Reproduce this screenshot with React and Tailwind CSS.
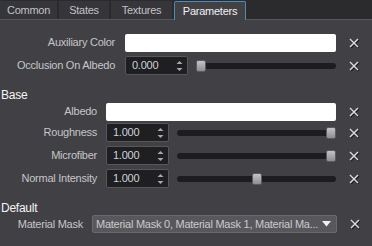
import React from 'react';

const font = { fontFamily: '"Liberation Sans", Arial, sans-serif' };

const ClearIcon = () => (
  <div className="w-9 flex justify-center items-center">
    <svg width="12" height="12" viewBox="0 0 12 12">
      <path d="M2 2 L10 10 M10 2 L2 10" stroke="#1c1c1e" strokeWidth="2.2" transform="translate(0.6 0.6)" />
      <path d="M2 2 L10 10 M10 2 L2 10" stroke="#dcdcdc" strokeWidth="1.5" />
    </svg>
  </div>
);

const SpinBox = ({ value, width }) => (
  <div className={`${width} h-[19px] flex items-center justify-between rounded-[2px] border border-[#56565b] bg-[#1f1f22] pl-[6px] pr-[4px]`}>
    <span className="text-[#cdd3da]">{value}</span>
    <svg width="7" height="12" viewBox="0 0 7 12">
      <path d="M0.5 4 L3.5 1 L6.5 4 Z" fill="#a8a8ac" />
      <path d="M0.5 8 L3.5 11 L6.5 8 Z" fill="#a8a8ac" />
    </svg>
  </div>
);

const Row = ({ label, labelWidth, height = 'h-[23px]', children }) => (
  <div className={`flex items-center ${height} pl-[17px]`}>
    <div className={`${labelWidth} text-right text-[#c6c6c8] shrink-0`}>{label}</div>
    <div className="flex-1 flex items-center ml-[9px]">{children}</div>
    <ClearIcon />
  </div>
);

const ColorField = () => <div className="flex-1 h-[18px] rounded-[2px] bg-white" />;

const SliderRow = ({ label, labelWidth, value, percent, spinWidth }) => (
  <Row label={label} labelWidth={labelWidth}>
    <SpinBox value={value} width={spinWidth} />
    <div className="relative flex-1 h-[14px] flex items-center ml-2">
      <div className="w-full h-[6px] rounded-full bg-[#1d1d1f]" />
      <div
        className="absolute top-[1px] w-[10px] h-[12px] rounded-[2px] border border-[#5c5c60] bg-gradient-to-b from-[#c4c4c6] to-[#8e8e92]"
        style={{ left: `calc((100% - 10px) * ${percent / 100})` }}
      />
    </div>
  </Row>
);

const tabs = [
  { name: 'Common', w: 'w-[57px]' },
  { name: 'States', w: 'w-[50px]' },
  { name: 'Textures', w: 'w-[61px]' },
  { name: 'Parameters', w: 'w-[72px]', active: true },
];

export default function App() {
  return (
    <div className="w-[372px] h-[246px] overflow-hidden bg-[#2b2b2e] text-[11px] tracking-[-0.25px] flex flex-col" style={font}>
      <div className="flex h-[19px] gap-[2px] items-end">
        {tabs.map((t) =>
          t.active ? (
            <div
              key={t.name}
              className={`${t.w} h-[19px] -mb-px relative z-10 flex items-center justify-center bg-[#404045] border border-b-0 border-[#4c8db8] rounded-t-[2px] text-[#f2f2f2]`}
            >
              {t.name}
            </div>
          ) : (
            <div key={t.name} className={`${t.w} h-[18px] flex items-center justify-center bg-[#35353a] text-[#c2c2c4]`}>
              {t.name}
            </div>
          )
        )}
      </div>
      <div className="flex-1 bg-[#404045] border-t border-[#56565b] pt-[11px]">
        <Row label="Auxiliary Color" labelWidth="w-[98px]">
          <div className="ml-px flex-1 flex">
            <ColorField />
          </div>
        </Row>
        <SliderRow label="Occlusion On Albedo" labelWidth="w-[98px]" value="0.000" percent={0} spinWidth="w-[63px] ml-px" />

        <div className="h-[14px] mt-[11px] flex items-center pl-[1px] text-[12px] text-[#f4f4f4]">Base</div>
        <Row label="Albedo" labelWidth="w-[80px]" height="h-[19px]">
          <ColorField />
        </Row>
        <SliderRow label="Roughness" labelWidth="w-[80px]" value="1.000" percent={100} spinWidth="w-[63px]" />
        <SliderRow label="Microfiber" labelWidth="w-[80px]" value="1.000" percent={100} spinWidth="w-[63px]" />
        <SliderRow label="Normal Intensity" labelWidth="w-[80px]" value="1.000" percent={50} spinWidth="w-[63px]" />

        <div className="h-[14px] mt-[11px] flex items-center pl-[1px] text-[12px] text-[#f4f4f4]">Default</div>
        <Row label="Material Mask" labelWidth="w-[66px]" height="h-[18px]">
          <div className="flex-1 h-[18px] flex items-center justify-between rounded-[2px] border border-[#6a6a6e] bg-[#58585c] pl-[3px] pr-[5px] min-w-0">
            <span className="text-[#cacacc] whitespace-nowrap overflow-hidden">Material Mask 0, Material Mask 1, Material Ma...</span>
            <svg width="9" height="6" viewBox="0 0 9 6" className="shrink-0 ml-1">
              <path d="M0 0 L9 0 L4.5 5.5 Z" fill="#f0f0f0" />
            </svg>
          </div>
        </Row>
      </div>
    </div>
  );
}
